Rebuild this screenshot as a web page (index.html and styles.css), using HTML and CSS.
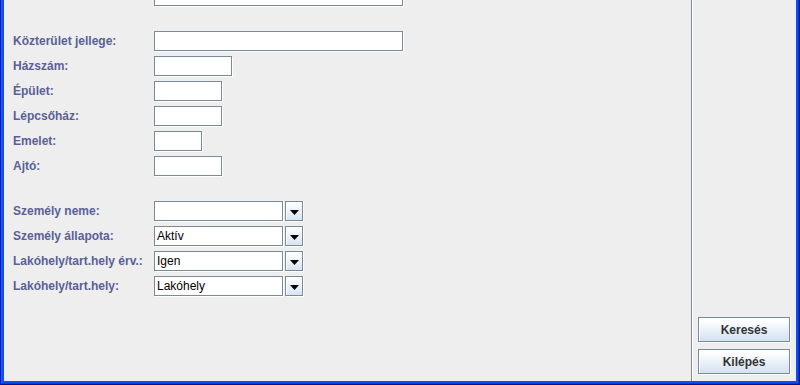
FILE: index.html
```html
<!DOCTYPE html>
<html lang="hu">
<head>
<meta charset="utf-8">
<title>Keresés</title>
<link rel="stylesheet" href="styles.css">
</head>
<body>
<div class="window">
  <div class="content">
    <div class="main">
      <div class="form">
        <label class="lbl">Közterület:</label>
        <div class="field w250"></div>
        <div class="spacer"></div>

        <label class="lbl">Közterület jellege:</label>
        <div class="field w250"></div>
        <label class="lbl">Házszám:</label>
        <div class="field w80"></div>
        <label class="lbl">Épület:</label>
        <div class="field w70"></div>
        <label class="lbl">Lépcsőház:</label>
        <div class="field w70"></div>
        <label class="lbl">Emelet:</label>
        <div class="field w50"></div>
        <label class="lbl">Ajtó:</label>
        <div class="field w70"></div>
        <div class="spacer"></div>

        <label class="lbl">Személy neme:</label>
        <div class="combo"><div class="combo-text"></div><div class="combo-btn"><svg class="arrow" width="9" height="5" viewBox="0 0 9 5"><polygon points="0,0 9,0 4.5,5" fill="#000"/></svg></div></div>
        <label class="lbl">Személy állapota:</label>
        <div class="combo"><div class="combo-text">Aktív</div><div class="combo-btn"><svg class="arrow" width="9" height="5" viewBox="0 0 9 5"><polygon points="0,0 9,0 4.5,5" fill="#000"/></svg></div></div>
        <label class="lbl">Lakóhely/tart.hely érv.:</label>
        <div class="combo"><div class="combo-text">Igen</div><div class="combo-btn"><svg class="arrow" width="9" height="5" viewBox="0 0 9 5"><polygon points="0,0 9,0 4.5,5" fill="#000"/></svg></div></div>
        <label class="lbl">Lakóhely/tart.hely:</label>
        <div class="combo"><div class="combo-text">Lakóhely</div><div class="combo-btn"><svg class="arrow" width="9" height="5" viewBox="0 0 9 5"><polygon points="0,0 9,0 4.5,5" fill="#000"/></svg></div></div>
      </div>
    </div>
    <div class="side">
      <button class="btn">Keresés</button>
      <button class="btn">Kilépés</button>
    </div>
  </div>
</div>
</body>
</html>
```
FILE: styles.css
```css
html, body {
  margin: 0;
  padding: 0;
}
body {
  width: 800px;
  height: 385px;
  overflow: hidden;
  font-family: "Liberation Sans", Arial, sans-serif;
  font-size: 12px;
}
.window {
  box-sizing: border-box;
  width: 800px;
  height: 385px;
  padding: 0 4px 4px 4px;
  background: #0a4ff0;
  box-shadow: inset 1px 0 #0018b8, inset -1px 0 #00138c, inset 0 -1px #00128a, inset 2px 0 #1f5ff6, inset -2px 0 #0833c8, inset 0 -2px #0a3bd6;
  display: flex;
}
.content {
  flex: 1;
  background: #eeeeee;
  display: flex;
  overflow: hidden;
}
.main {
  width: 687px;
  box-sizing: border-box;
  padding-left: 9px;
  overflow: hidden;
}
.form {
  margin-top: -14px;
  display: grid;
  grid-template-columns: 141px auto;
  row-gap: 4px;
  align-items: center;
}
.lbl {
  font-weight: bold;
  color: #5a5f97;
  font-size: 12px;
  line-height: 21px;
  white-space: nowrap;
}
.spacer {
  grid-column: 1 / 3;
  height: 16px;
}
.field {
  box-sizing: border-box;
  height: 20px;
  background: #fff;
  border: 1px solid #7a8a99;
  box-shadow: 1px 1px 0 #fff;
  margin-bottom: 1px;
}
.w250 { width: 249px; }
.w80 { width: 78px; }
.w70 { width: 68px; }
.w50 { width: 48px; }
.combo {
  display: flex;
  width: 150px;
  height: 21px;
}
.combo-text {
  box-sizing: border-box;
  width: 129px;
  height: 20px;
  background: #fff;
  border: 1px solid #7a8a99;
  box-shadow: 1px 1px 0 #fff;
  padding-left: 2px;
  font-size: 12px;
  line-height: 18px;
  color: #000;
  margin-right: 2px;
}
.combo-btn {
  box-sizing: border-box;
  width: 18px;
  height: 20px;
  border: 1px solid #7a8a99;
  box-shadow: 1px 1px 0 #fff, inset 1px 1px 0 #fff;
  background: linear-gradient(#ffffff, #d8e4f2);
  display: flex;
  align-items: center;
  justify-content: center;
  padding-top: 2px;
}
.arrow {
  display: block;
}
.side {
  box-sizing: border-box;
  width: 105px;
  border-left: 1px solid #7a8a99;
  box-shadow: inset 1px 0 #fff;
  display: flex;
  flex-direction: column;
  justify-content: flex-end;
  align-items: flex-start;
  padding: 0 0 6px 6px;
  gap: 6px;
}
.btn {
  box-sizing: border-box;
  width: 92px;
  height: 25px;
  margin: 0 1px 1px 0;
  padding: 0;
  border: 1px solid #7a8a99;
  box-shadow: 1px 1px 0 #fff, inset 1px 1px 0 #fff;
  background: linear-gradient(#ffffff 10%, #d3e1f1);
  font-family: "Liberation Sans", Arial, sans-serif;
  font-size: 12px;
  font-weight: bold;
  color: #333333;
  text-align: center;
}
```
